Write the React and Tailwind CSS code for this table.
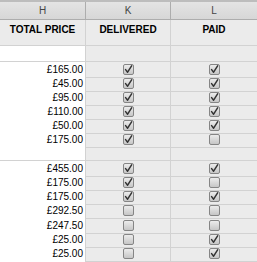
import React from "react";

const rows = [
  ["£165.00", true, true],
  ["£45.00", true, true],
  ["£95.00", true, true],
  ["£110.00", true, true],
  ["£50.00", true, true],
  ["£175.00", true, false],
  null,
  ["£455.00", true, true],
  ["£175.00", true, false],
  ["£175.00", true, true],
  ["£292.50", false, false],
  ["£247.50", false, false],
  ["£25.00", false, true],
  ["£25.00", false, true],
];

const Box = ({ checked }) => (
  <div className="w-[11px] h-[11px] rounded-[2px] border border-[#858585] bg-gradient-to-b from-[#ececec] to-[#c6c6c6] flex items-center justify-center">
    {checked && (
      <svg width="9" height="9" viewBox="0 0 9 9">
        <path d="M1.6 4.6 L3.6 7.2 L7.6 0.9" fill="none" stroke="#333" strokeWidth="1.5" strokeLinejoin="round" strokeLinecap="round" />
      </svg>
    )}
  </div>
);

const cols = "grid grid-cols-[86px_85px_86px]";

const App = () => {
  return (
    <div className="w-[257px] h-[262px] overflow-hidden bg-[#ebebeb] font-['Liberation_Sans',Arial,sans-serif] text-[10px] text-black">
      {/* column letters */}
      <div className={`${cols} h-[20px] border-t-2 border-[#bdbdbd] bg-gradient-to-b from-[#e4e4e4] to-[#d6d6d6]`}>
        {["H", "K", "L"].map((l) => (
          <div key={l} className="flex items-center justify-center border-r border-b border-[#adadad] text-[#444] last:border-r-0">
            {l}
          </div>
        ))}
      </div>

      {/* titles */}
      <div className={`${cols} h-[26px]`}>
        {["TOTAL PRICE", "DELIVERED", "PAID"].map((t) => (
          <div key={t} className="flex justify-center pt-[2px] font-bold border-r border-b border-[#d2d2d2] last:border-r-0">
            {t}
          </div>
        ))}
      </div>

      {/* blank row */}
      <div className={`${cols} h-[15.5px]`}>
        <div className="bg-white border-r border-b border-[#d2d2d2]" />
        <div className="border-r border-b border-[#d2d2d2]" />
        <div className="border-b border-[#d2d2d2]" />
      </div>

      {rows.map((r, i) => (
        <div key={i} className={`${cols} h-[14.2px]`}>
          <div className="bg-white border-r border-b border-[#d2d2d2] flex items-center justify-end pr-[2px]">
            {r ? r[0] : ""}
          </div>
          <div className="border-r border-b border-[#d2d2d2] flex items-center justify-center">
            {r && <Box checked={r[1]} />}
          </div>
          <div className="border-b border-[#d2d2d2] flex items-center justify-center">
            {r && <Box checked={r[2]} />}
          </div>
        </div>
      ))}

      <div className={`${cols} h-[14px]`}>
        <div className="bg-white border-r border-[#d2d2d2]" />
        <div className="border-r border-[#d2d2d2]" />
        <div />
      </div>
    </div>
  );
};

export default App;
